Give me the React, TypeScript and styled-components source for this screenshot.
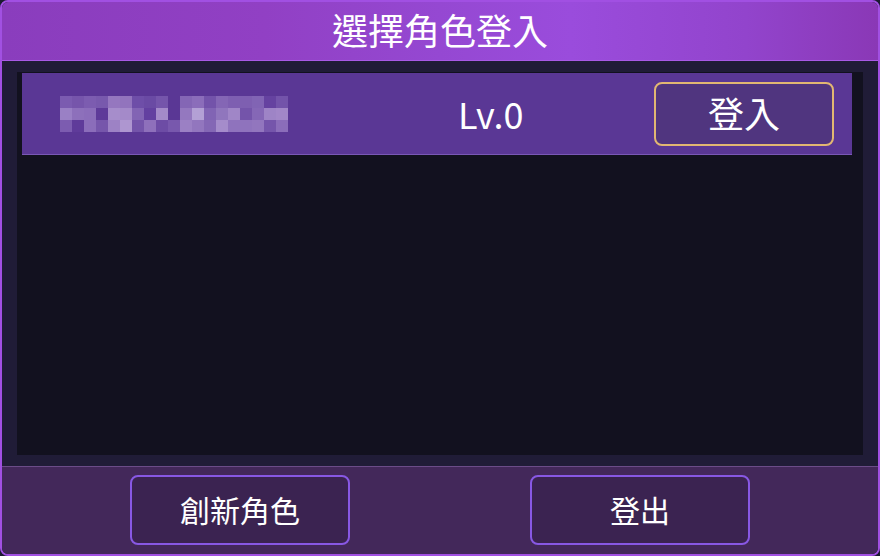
import React from "react";
import styled, { createGlobalStyle } from "styled-components";

const GlobalStyle = createGlobalStyle`
  html, body {
    margin: 0;
    padding: 0;
    background: #1b1a30;
  }
  body {
    font-family: "Noto Sans CJK TC", "Noto Sans", sans-serif;
    color: #fff;
  }
`;

const Frame = styled.div`
  width: 880px;
  height: 556px;
  box-sizing: border-box;
  border: 2px solid #a150e2;
  border-radius: 8px;
  overflow: hidden;
  display: flex;
  flex-direction: column;
`;

const Header = styled.div`
  height: 59px;
  flex: none;
  border-bottom: 1px solid #a95ae6;
  background: linear-gradient(
    90deg,
    #8a3dbd 0%,
    #9140c4 30%,
    #9548d2 50%,
    #9a4cdc 65%,
    #9244cc 85%,
    #8a38b6 100%
  );
  display: flex;
  align-items: center;
  justify-content: center;
  font-size: 36px;
  line-height: 1;
  padding-bottom: 4px;
  box-sizing: border-box;
`;

const Body = styled.div`
  flex: 1;
  background: #201c37;
  padding: 11px 15px;
  display: flex;
`;

const ListPanel = styled.div`
  flex: 1;
  background: #12111f;
  padding: 1px 11px 0 5px;
  display: flex;
  flex-direction: column;
`;

const Row = styled.div`
  height: 81px;
  background: #5a3795;
  border-bottom: 1px solid #7a58b6;
  display: flex;
  align-items: center;
  padding: 0 18px 0 38px;
`;

const Level = styled.div`
  margin-left: 170px;
  font-size: 36px;
  line-height: 1;
  padding-bottom: 2px;
`;

const LoginButton = styled.button`
  margin-left: auto;
  width: 180px;
  height: 64px;
  box-sizing: border-box;
  border: 2px solid #e2b772;
  border-radius: 8px;
  background: #50357f;
  color: #fff;
  font-family: inherit;
  font-size: 36px;
  line-height: 1;
  padding: 0 0 4px;
  margin-top: 1px;
`;

const Footer = styled.div`
  height: 88px;
  flex: none;
  background: #43285a;
  border-top: 1px solid #6b4c88;
  display: flex;
  justify-content: center;
  align-items: flex-start;
  gap: 180px;
  padding-top: 8px;
  box-sizing: border-box;
`;

const FooterButton = styled.button`
  width: 220px;
  height: 70px;
  box-sizing: border-box;
  border: 2px solid #8858e4;
  border-radius: 8px;
  background: #3b2351;
  color: #fff;
  font-family: inherit;
  font-size: 30px;
  line-height: 1;
  padding: 0 0 2px;
`;

const mosaic = [
  ["#7b5bb0", "#7655ab", "#7c5cb0", "#7859ad", "#9577bf", "#9274bd", "#6e4ea8", "#6a4aa4", "#7555ab", "#5a3795", "#8466b5", "#8b6dba", "#7353aa", "#8466b5", "#7e5fb1", "#7e5fb1", "#8164b4", "#6542a0", "#7353aa"],
  ["#9a80c5", "#8d70bb", "#8b6dba", "#5e3a99", "#a68dcb", "#a48ac9", "#8264b4", "#6340a0", "#a48ac9", "#5a3795", "#9478bf", "#b3a0d5", "#8164b4", "#9076bd", "#a086c7", "#7454aa", "#8567b6", "#9e84c6", "#a287c8"],
  ["#7c5cb0", "#5f3b9a", "#8b6dba", "#7656ab", "#9d82c5", "#ae96d0", "#7454aa", "#8e70bb", "#6d4ca5", "#7858ad", "#9b80c4", "#9276be", "#8467b5", "#a58ccb", "#8f73bd", "#8f73bd", "#9276be", "#7555ab", "#8b6dba"],
];

function PixelName() {
  return (
    <svg width={228} height={36} viewBox="0 0 228 36" style={{ flex: "none" }}>
      {mosaic.map((row, r) =>
        row.map((c, i) => (
          <rect key={`${r}-${i}`} x={i * 12} y={r * 12} width={12} height={12} fill={c} />
        ))
      )}
    </svg>
  );
}

export default function App() {
  return (
    <>
      <GlobalStyle />
      <Frame>
        <Header>選擇角色登入</Header>
        <Body>
          <ListPanel>
            <Row>
              <PixelName />
              <Level>Lv.0</Level>
              <LoginButton>登入</LoginButton>
            </Row>
          </ListPanel>
        </Body>
        <Footer>
          <FooterButton>創新角色</FooterButton>
          <FooterButton>登出</FooterButton>
        </Footer>
      </Frame>
    </>
  );
}
